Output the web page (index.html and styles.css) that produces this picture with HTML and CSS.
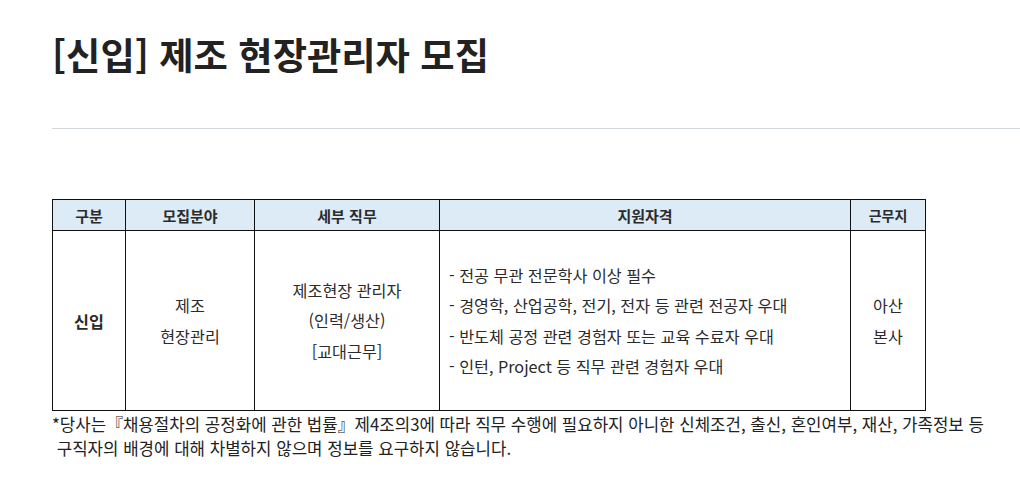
FILE: index.html
```html
<!DOCTYPE html>
<html lang="ko">
<head>
<meta charset="utf-8">
<link rel="stylesheet" href="styles.css">
</head>
<body>
<div class="page">
  <h1 class="title">[신입] 제조 현장관리자 모집</h1>
  <hr class="rule">
  <table class="jobs">
    <colgroup>
      <col class="c1"><col class="c2"><col class="c3"><col class="c4"><col class="c5">
    </colgroup>
    <thead>
      <tr>
        <th>구분</th>
        <th>모집분야</th>
        <th>세부 직무</th>
        <th>지원자격</th>
        <th class="small">근무지</th>
      </tr>
    </thead>
    <tbody>
      <tr>
        <td class="bold">신입</td>
        <td><p>제조</p><p>현장관리</p></td>
        <td><p>제조현장 관리자</p><p>(인력/생산)</p><p>[교대근무]</p></td>
        <td class="left">
          <p>- 전공 무관 전문학사 이상 필수</p>
          <p>- 경영학, 산업공학, 전기, 전자 등 관련 전공자 우대</p>
          <p>- 반도체 공정 관련 경험자 또는 교육 수료자 우대</p>
          <p>- 인턴, Project 등 직무 관련 경험자 우대</p>
        </td>
        <td><p>아산</p><p>본사</p></td>
      </tr>
    </tbody>
  </table>
  <p class="note">*당사는『채용절차의 공정화에 관한 법률』제4조의3에 따라 직무 수행에 필요하지 아니한 신체조건, 출신, 혼인여부, 재산, 가족정보 등<br>&nbsp;구직자의 배경에 대해 차별하지 않으며 정보를 요구하지 않습니다.</p>
</div>
</body>
</html>
```

FILE: styles.css
```css
html, body {
  margin: 0;
  padding: 0;
  background: #fff;
}
body {
  font-family: "Noto Sans CJK KR", "Noto Sans", sans-serif;
  color: #222;
}
.page {
  padding: 27px 0 0 52px;
}
.title {
  margin: 0;
  font-size: 37.3px;
  font-weight: 700;
  line-height: 54px;
  color: #222;
  letter-spacing: 0;
}
.rule {
  margin: 47px 0 0 0;
  border: 0;
  border-top: 1px solid #d2d7dc;
  height: 0;
}
.jobs {
  margin-top: 70px;
  border-collapse: collapse;
  width: 873px;
  table-layout: fixed;
  font-size: 16.2px;
  color: #2b2b2b;
}
.c1 { width: 73px; }
.c2 { width: 129px; }
.c3 { width: 185px; }
.c4 { width: 411px; }
.c5 { width: 75px; }
.jobs th, .jobs td {
  border: 1px solid #111;
  text-align: center;
  vertical-align: middle;
  padding: 0;
}
.jobs th {
  background: #ddebf7;
  height: 30px;
  font-weight: 700;
  font-size: 15px;
}
.jobs th.small { font-size: 14px; }
.jobs td {
  height: 179px;
}
.jobs td p {
  margin: 0;
  line-height: 30.5px;
}
.jobs td.bold { font-weight: 700; }
.jobs td.left {
  text-align: left;
  padding-left: 9px;
}
.note {
  margin: 1px 0 0 0;
  font-size: 16.8px;
  line-height: 24px;
  color: #222;
  letter-spacing: 0;
}
```
